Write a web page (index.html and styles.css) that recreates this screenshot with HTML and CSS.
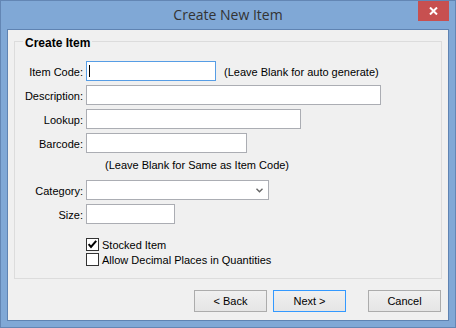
FILE: index.html
```html
<!DOCTYPE html>
<html>
<head>
<meta charset="utf-8">
<link rel="stylesheet" href="styles.css">
</head>
<body>
<div class="window">
  <div class="titlebar">
    <div class="title">Create New Item</div>
    <div class="close">
      <svg width="9" height="8" viewBox="0 0 9 8"><path d="M1 0.5 L8 7.5 M8 0.5 L1 7.5" stroke="#fff" stroke-width="2"/></svg>
    </div>
  </div>
  <div class="client">
    <div class="group">
      <div class="group-title">Create Item</div>
      <div class="form">
        <div class="row">
          <span class="lbl">Item Code:</span>
          <div class="field focus w-code"><span class="caret"></span></div>
          <span class="hint">(Leave Blank for auto generate)</span>
        </div>
        <div class="row">
          <span class="lbl">Description:</span>
          <div class="field w-desc"></div>
        </div>
        <div class="row">
          <span class="lbl">Lookup:</span>
          <div class="field w-lookup"></div>
        </div>
        <div class="row">
          <span class="lbl">Barcode:</span>
          <div class="field w-barcode"></div>
        </div>
        <div class="note-row">
          <span class="note">(Leave Blank for Same as Item Code)</span>
        </div>
        <div class="row">
          <span class="lbl">Category:</span>
          <div class="field combo w-cat">
            <svg width="7" height="5" viewBox="0 0 7 5"><polyline points="0.5,0.8 3.5,3.8 6.5,0.8" fill="none" stroke="#666" stroke-width="1.4"/></svg>
          </div>
        </div>
        <div class="row">
          <span class="lbl">Size:</span>
          <div class="field w-size"></div>
        </div>
        <div class="checks">
          <div class="check">
            <svg class="box" width="13" height="13" viewBox="0 0 13 13"><rect x="0.5" y="0.5" width="12" height="12" fill="#fff" stroke="#333"/><path d="M2.6 6.2 L5 9 L10.2 2.8" fill="none" stroke="#000" stroke-width="2"/></svg>
            <span>Stocked Item</span>
          </div>
          <div class="check">
            <svg class="box" width="13" height="13" viewBox="0 0 13 13"><rect x="0.5" y="0.5" width="12" height="12" fill="#fff" stroke="#333"/></svg>
            <span>Allow Decimal Places in Quantities</span>
          </div>
        </div>
      </div>
    </div>
    <div class="buttons">
      <div class="btn">&lt; Back</div>
      <div class="btn default">Next &gt;</div>
      <div class="btn cancel">Cancel</div>
    </div>
  </div>
</div>
</body>
</html>
```

FILE: styles.css
```css
html, body {
  margin: 0;
  padding: 0;
  background: #7fa7d5;
}
body {
  font-family: "Liberation Sans", Arial, sans-serif;
  font-size: 11px;
  color: #000;
}
.window {
  width: 456px;
  height: 328px;
  box-sizing: border-box;
  border: 1px solid #6386b4;
  background: #80a8d6;
  display: flex;
  flex-direction: column;
}
.titlebar {
  height: 28px;
  flex: none;
  display: grid;
  grid-template-columns: 1fr auto 1fr;
}
.title {
  grid-column: 2;
  font-family: "Open Sans", "Noto Sans", sans-serif;
  font-size: 14px;
  line-height: 28px;
  color: #333;
}
.close {
  grid-column: 3;
  justify-self: end;
  align-self: start;
  width: 31px;
  height: 20px;
  margin-right: 6px;
  background: #c75050;
  display: flex;
  align-items: center;
  justify-content: center;
}
.client {
  flex: 1;
  margin: 0 6px 6px 6px;
  border: 1px solid #5f83b2;
  background: #f0f0f0;
}
.group {
  margin: 11px 6px 0 6px;
  border: 1px solid #dcdcdc;
  padding-bottom: 12px;
}
.group-title {
  width: fit-content;
  margin: -6px 0 0 8px;
  padding: 0 2px;
  background: #f0f0f0;
  font-weight: bold;
  font-size: 12px;
  line-height: 14px;
}
.form {
  margin-top: 11px;
  display: flex;
  flex-direction: column;
  gap: 4px;
}
.row {
  height: 20px;
  display: flex;
  align-items: flex-start;
}
.lbl {
  width: 68px;
  margin-right: 3px;
  text-align: right;
  line-height: 22px;
  white-space: nowrap;
}
.hint {
  margin-left: 8px;
  line-height: 22px;
  white-space: nowrap;
}
.field {
  box-sizing: border-box;
  height: 20px;
  border: 1px solid #abadb3;
  background: #fff;
}
.field.focus {
  border-color: #569de5;
  padding: 3px 0 0 2px;
}
.caret {
  display: block;
  width: 1px;
  height: 12px;
  background: #000;
}
.w-code { width: 130px; }
.w-desc { width: 295px; }
.w-lookup { width: 215px; }
.w-barcode { width: 161px; }
.w-cat { width: 183px; }
.w-size { width: 89px; }
.combo {
  display: flex;
  justify-content: flex-end;
  padding: 7px 5px 0 0;
}
.combo svg { display: block; }
.note-row {
  height: 19px;
  padding-left: 90px;
}
.note {
  line-height: 16px;
  white-space: nowrap;
}
.checks {
  margin-top: 10px;
  margin-left: 71px;
  display: flex;
  flex-direction: column;
  gap: 2px;
}
.check {
  height: 13px;
  display: flex;
  align-items: center;
  gap: 3px;
  white-space: nowrap;
}
.check .box { display: block; flex: none; }
.check span { line-height: 13px; padding-top: 1px; }
.buttons {
  margin-top: 11px;
  margin-right: 7px;
  display: flex;
  justify-content: flex-end;
  gap: 6px;
}
.btn {
  box-sizing: border-box;
  width: 73px;
  height: 22px;
  border: 1px solid #acacac;
  background: linear-gradient(#f0f0f0, #e5e5e5);
  text-align: center;
  line-height: 20px;
}
.btn.default {
  border-color: #3399ff;
}
.btn.cancel {
  margin-left: 16px;
}
```
